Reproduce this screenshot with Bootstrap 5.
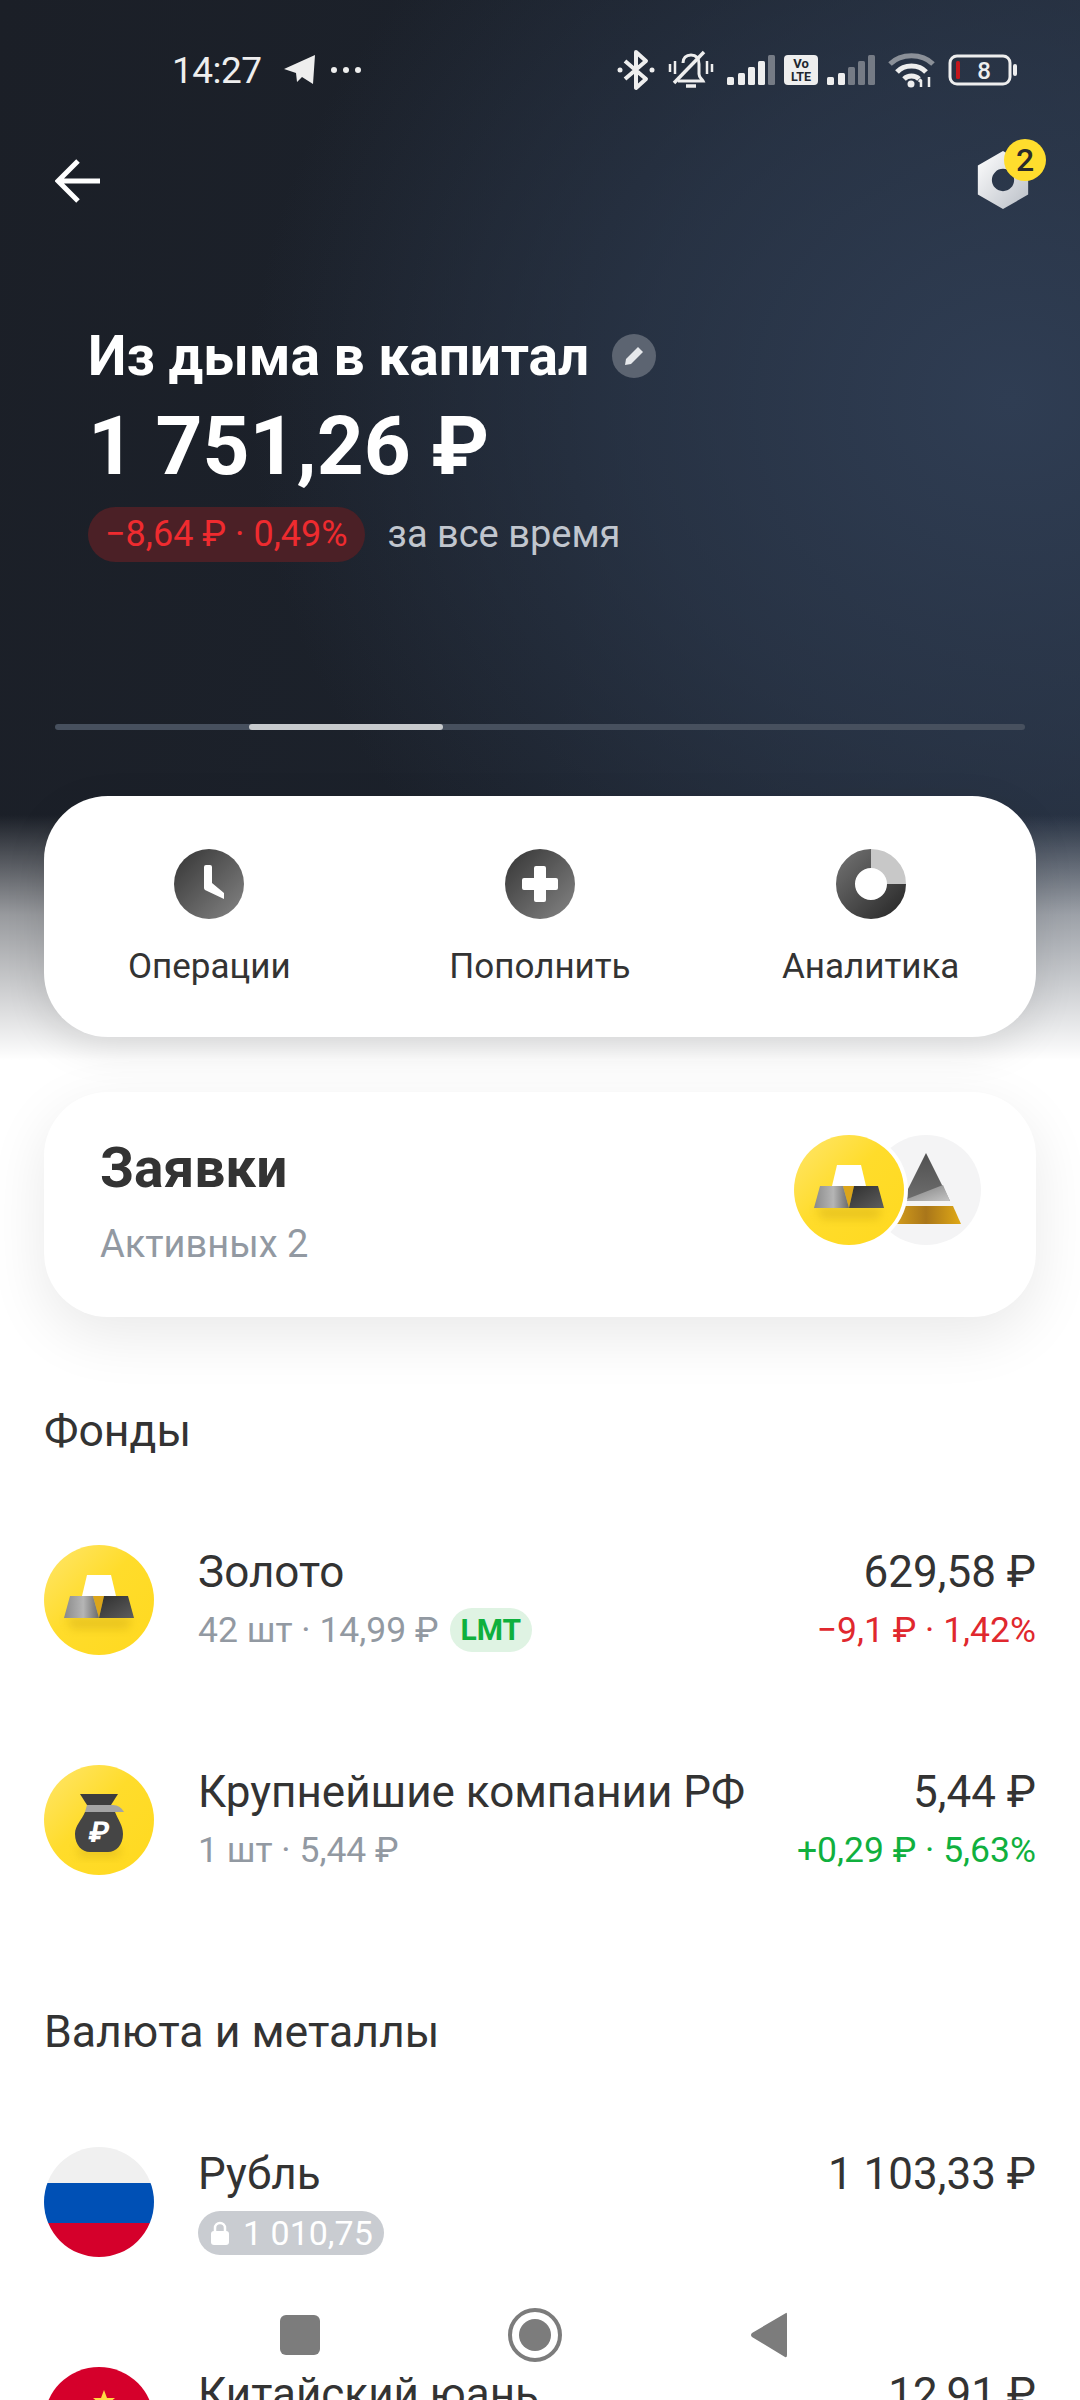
<!DOCTYPE html>
<html lang="ru">
<head>
    <meta charset="UTF-8">
    <meta name="viewport" content="width=device-width, initial-scale=1.0">
    <title>Из дыма в капитал</title>
    <link href="https://cdn.jsdelivr.net/npm/bootstrap@5.3.0/dist/css/bootstrap.min.css" rel="stylesheet">
    <style>
        html, body {
            width: 1080px;
            height: 2400px;
            overflow: hidden;
            background: #fff;
        }
        body {
            font-family: Roboto, "Liberation Sans", sans-serif;
            color: #333;
        }
        .app {
            position: relative;
            width: 1080px;
            height: 2400px;
            overflow: hidden;
            background:
                linear-gradient(to bottom, rgba(255,255,255,0) 815px, rgba(255,255,255,.55) 915px, #fff 1060px),
                radial-gradient(ellipse 760px 680px at 1010px 400px, #2f3d53 0%, rgba(46,60,82,.6) 50%, rgba(46,60,82,0) 100%),
                linear-gradient(100deg, #1b1f27 0%, #1c222c 45%, #252e3c 100%);
        }
        .status-row { height: 140px; padding: 0 62px 0 172px; }
        .status-time { font-size: 37px; color: #eee; line-height: 1; letter-spacing: -.5px; }
        .tg-icon { margin-left: 20px; }
        .dots-icon { margin-left: 11px; }
        .status-icons { gap: 9px; }
        .top-row { height: 82px; padding: 0 32px 0 55px; }
        .hero { padding: 0 55px; }
        .hero-title { margin: 104px 0 0 33px; color: #fff; font-size: 55px; font-weight: 700; line-height: 60px; gap: 23px; }
        .edit-dot { width: 44px; height: 44px; background: #5c6471; }
        .hero-sum { margin: 15px 0 0 33px; color: #fff; font-size: 82px; font-weight: 700; line-height: 90px; }
        .hero-delta { margin: 15px 0 0 33px; gap: 23px; }
        .delta-chip { height: 55px; padding: 0 17px; background: #4b2026; color: #ef2b2f; font-size: 36px; line-height: 55px; border-radius: 28px; }
        .delta-note { color: #c1c6ce; font-size: 38px; }
        .track { height: 6px; margin-top: 161px; background: #47505e; border-radius: 3px; }
        .track-thumb { width: 194px; height: 6px; margin-left: 194px; background: #c7cacd; border-radius: 3px; }
        .panel {
            margin: 0 44px;
            border: 0;
            border-radius: 64px;
            background: #fff;
        }
        .panel-actions { margin-top: 66px; height: 241px; padding-top: 53px; box-shadow: 0 12px 40px rgba(0,0,0,.1); }
        .action-label { margin-top: 26px; font-size: 35px; line-height: 44px; }
        .panel-orders { margin-top: 55px; height: 225px; padding: 46px 55px 0 56px; box-shadow: 0 18px 60px rgba(0,0,0,.09); }
        .orders-title { font-size: 55px; font-weight: 700; line-height: 60px; }
        .orders-sub { margin-top: 23px; font-size: 38px; line-height: 46px; color: #9299a2; }
        .orders-pics { margin-top: -26px; }
        .pic-back { margin-left: -37px; }
        .section-title { margin: 84px 44px 29px; font-size: 44.600px; font-weight: 400; line-height: 60px; }
        .section-next { margin-top: 72px; margin-bottom: 30px; }
        .asset-row { height: 220px; padding: 55px 44px 0; gap: 44px; }
        .asset-name { font-size: 44px; line-height: 54px; }
        .asset-sub { margin-top: 3px; font-size: 35.500px; line-height: 56px; color: #9299a2; gap: 11px; }
        .asset-sum { font-size: 44px; line-height: 54px; }
        .asset-delta { margin-top: 3px; font-size: 35.500px; line-height: 56px; }
        .delta-down { color: #e0282e; }
        .delta-up { color: #10b03e; }
        .lmt-chip { height: 44px; padding: 0 11px; background: #dff3e3; color: #0fb03d; font-size: 30px; font-weight: 700; line-height: 44px; border-radius: 22px; }
        .lock-chip { margin-top: 10px; height: 44px; padding: 0 11px 0 13px; gap: 14px; background: #c9ccd1; color: #fff; font-size: 34px; line-height: 44px; border-radius: 22px; }
        .nut-wrap { width: 72px; height: 84px; }
        .nut-shape { margin-top: 11px; }
        .nut-badge {
            position: absolute;
            top: 0;
            right: 2px;
            width: 42px;
            height: 42px;
            background: #ffdd2d;
            color: #2b2b2b;
            font-size: 32px;
            font-weight: 500;
            line-height: 42px;
        }
        /* системная панель поверх списка */
        .sys-nav {
            position: absolute;
            left: 0;
            right: 0;
            top: 2310px;
            height: 50px;
        }
        .sys-square { position: absolute; left: 280px; top: 5px; width: 40px; height: 40px; background: #7c7c7c; border-radius: 6px; }
        .sys-home { position: absolute; left: 508px; top: -2px; }
        .sys-back { position: absolute; left: 750px; top: 1px; }
    </style>
</head>
<body>
    <svg width="0" height="0" class="d-block">
        <defs>
            <linearGradient id="yellowFill" x1="0" y1="0" x2="1" y2="1">
                <stop offset="0" stop-color="#ffe66e"/>
                <stop offset=".45" stop-color="#ffdc2b"/>
                <stop offset="1" stop-color="#ffd91f"/>
            </linearGradient>
            <linearGradient id="darkRound" x1="0" y1="0" x2="1" y2="1">
                <stop offset="0" stop-color="#343434"/>
                <stop offset="1" stop-color="#858585"/>
            </linearGradient>
            <linearGradient id="donutFill" x1="0" y1="0" x2="1" y2="1">
                <stop offset="0" stop-color="#6a6a6a"/>
                <stop offset="1" stop-color="#2f2f2f"/>
            </linearGradient>
            <linearGradient id="barLeft" x1="0" y1="0" x2="1" y2="0">
                <stop offset="0" stop-color="#8a8a8a"/>
                <stop offset=".55" stop-color="#b5b5b5"/>
                <stop offset="1" stop-color="#6a6a6a"/>
            </linearGradient>
            <linearGradient id="barRight" x1="0" y1="0" x2="1" y2="1">
                <stop offset="0" stop-color="#2f2f2f"/>
                <stop offset="1" stop-color="#5e5e5e"/>
            </linearGradient>
            <linearGradient id="peakFill" x1="0" y1="0" x2="0" y2="1">
                <stop offset="0" stop-color="#505050"/>
                <stop offset="1" stop-color="#6e6e6e"/>
            </linearGradient>
            <linearGradient id="peakLight" x1="0" y1="0" x2="1" y2="1">
                <stop offset="0" stop-color="#7a7a7a"/>
                <stop offset="1" stop-color="#c4c4c4"/>
            </linearGradient>
            <linearGradient id="goldBand" x1="0" y1="0" x2="1" y2="0">
                <stop offset="0" stop-color="#d9a21c"/>
                <stop offset=".5" stop-color="#a9761a"/>
                <stop offset="1" stop-color="#e0a916"/>
            </linearGradient>
            <linearGradient id="nutFill" x1="0" y1="0" x2="1" y2="1">
                <stop offset="0" stop-color="#ffffff"/>
                <stop offset="1" stop-color="#b9bec6"/>
            </linearGradient>
            <filter id="softShade" x="-40%" y="-60%" width="180%" height="220%">
                <feGaussianBlur stdDeviation="5"/>
            </filter>
            <symbol id="goldPic" viewBox="0 0 110 110">
                <circle cx="55" cy="55" r="55" fill="url(#yellowFill)"/>
                <path d="M22 72H88L84 84H28Z" fill="#b8930e" opacity=".3" filter="url(#softShade)"/>
                <path d="M43 30H67L72 51H38Z" fill="#fff"/>
                <path d="M49 51H60L55 73Z" fill="#dca51a"/>
                <path d="M26 51H49L55 73H20Z" fill="url(#barLeft)"/>
                <path d="M60 51H84L90 73H55Z" fill="url(#barRight)"/>
            </symbol>
            <symbol id="bagPic" viewBox="0 0 110 110">
                <circle cx="55" cy="55" r="55" fill="url(#yellowFill)"/>
                <path d="M32 82H78L74 92H36Z" fill="#b8930e" opacity=".3" filter="url(#softShade)"/>
                <path d="M36 29H74L67 40H43Z" fill="#3d3d3d"/>
                <path d="M43 40H69Q76 40 80 47H41Z" fill="#a4a4a4"/>
                <path d="M41 47H71C74 55 79 60 79 69C79 80 72 87 64 87H46C38 87 31 80 31 69C31 60 38 55 41 47Z" fill="#454545"/>
                <text x="55" y="77" text-anchor="middle" font-family="Roboto, sans-serif" font-size="29" font-weight="700" fill="#fff" transform="skewX(-10) translate(12 0)">₽</text>
            </symbol>
        </defs>
    </svg>

    <div class="app">
        <div class="status-row d-flex align-items-center justify-content-between">
            <div class="d-flex align-items-center">
                <span class="status-time">14:27</span>
                <svg class="tg-icon" width="36" height="32" viewBox="0 0 36 32"><path d="M33 1 31 30 20 23 15 28 14 19 2 15Z" fill="#eee"/></svg>
                <svg class="dots-icon" width="34" height="8" viewBox="0 0 34 8"><circle cx="5" cy="4" r="3" fill="#eee"/><circle cx="17" cy="4" r="3" fill="#eee"/><circle cx="29" cy="4" r="3" fill="#eee"/></svg>
            </div>
            <div class="status-icons d-flex align-items-center">
                <svg width="38" height="42" viewBox="0 0 38 42" fill="none" stroke="#eee" stroke-width="4" stroke-linejoin="round"><path d="M8 12 29 30 19 39V3L29 12 8 30"/><circle cx="3" cy="21" r="2.500" fill="#eee" stroke="none"/><circle cx="35" cy="21" r="2.500" fill="#eee" stroke="none"/></svg>
                <svg class="ms-1" width="46" height="40" viewBox="0 0 46 40" fill="none" stroke="#eee" stroke-width="3"><path d="M15 13C15 8 18 5 23 5 28 5 31 8 31 14V24C31 28 34 29 35 31H10"/><path d="M36 2 6 33" stroke-width="3.500"/><path d="M18 36H28" stroke-width="3.500"/><path d="M2 14V22M7 11V24M39 11V24M44 14V22" stroke-width="2.500"/></svg>
                <svg class="ms-1" width="48" height="32" viewBox="0 0 48 32" fill="#eee"><rect x="0" y="23" width="7" height="8" rx="1.500"/><rect x="11" y="19" width="7" height="12" rx="1.500"/><rect x="21" y="13" width="7" height="18" rx="1.500"/><rect x="31" y="7" width="7" height="24" rx="1.500"/><rect x="41" y="1" width="7" height="30" rx="1.500" fill="#757b85"/></svg>
                <svg width="34" height="30" viewBox="0 0 34 30"><rect width="34" height="30" rx="4" fill="#eee"/><text x="17" y="13" text-anchor="middle" font-family="Roboto, sans-serif" font-size="13" font-weight="700" fill="#20262f">Vo</text><text x="17" y="26" text-anchor="middle" font-family="Roboto, sans-serif" font-size="12.500" font-weight="700" fill="#20262f">LTE</text></svg>
                <svg width="48" height="32" viewBox="0 0 48 32" fill="#757b85"><rect x="0" y="23" width="7" height="8" rx="1.500" fill="#eee"/><rect x="11" y="19" width="7" height="12" rx="1.500" fill="#eee"/><rect x="21" y="13" width="7" height="18" rx="1.500"/><rect x="31" y="7" width="7" height="24" rx="1.500"/><rect x="41" y="1" width="7" height="30" rx="1.500"/></svg>
                <svg class="ms-1" width="47" height="36" viewBox="0 0 47 36" fill="none" stroke-width="5"><path d="M2 12C13 1 34 1 45 12" stroke="#8b9098"/><path d="M9 20C16 12 31 12 38 20" stroke="#eee"/><path d="M16 27C20 23 27 23 31 27" stroke="#eee"/><circle cx="23" cy="32" r="3.500" fill="#eee"/><path d="M33 28V35M31 30 33 27M41 25V35" stroke="#eee" stroke-width="2.500"/></svg>
                <svg class="ms-1" width="70" height="32" viewBox="0 0 70 32"><rect x="2" y="2" width="60" height="28" rx="7" fill="none" stroke="#eee" stroke-width="3"/><rect x="8" y="7" width="4" height="18" rx="1.500" fill="#c4161c"/><text x="36" y="25" text-anchor="middle" font-family="Roboto, sans-serif" font-size="24" font-weight="500" fill="#eee">8</text><rect x="65" y="10" width="4" height="12" rx="2" fill="#eee"/></svg>
            </div>
        </div>

        <div class="top-row d-flex align-items-center justify-content-between">
            <svg width="46" height="44" viewBox="0 0 46 44" fill="none" stroke="#fff" stroke-width="5"><path d="M45 22H4M23 2 3 22 23 42"/></svg>
            <div class="nut-wrap position-relative">
                <svg class="nut-shape d-block" width="54" height="60" viewBox="0 0 54 62"><path fill-rule="evenodd" d="M27 1 53 16V46L27 61 1 46V16ZM27 19.500A11.500 11.500 0 1 0 27 42.500 11.500 11.500 0 1 0 27 19.500Z" fill="url(#nutFill)"/></svg>
                <span class="nut-badge rounded-circle text-center">2</span>
            </div>
        </div>

        <div class="hero">
            <div class="hero-title d-flex align-items-center">
                <span>Из дыма в капитал</span>
                <span class="edit-dot rounded-circle d-flex align-items-center justify-content-center">
                    <svg width="22" height="22" viewBox="0 0 22 22"><path d="M15 2 20 7 8 19 2 20 3 14Z" fill="#e6e8eb"/></svg>
                </span>
            </div>
            <div class="hero-sum">1 751,26 ₽</div>
            <div class="hero-delta d-flex align-items-center">
                <span class="delta-chip">−8,64 ₽ · 0,49%</span>
                <span class="delta-note">за все время</span>
            </div>
            <div class="track">
                <div class="track-thumb"></div>
            </div>
        </div>

        <div class="card panel panel-actions">
            <div class="row g-0 text-center">
                <div class="col-4">
                    <svg width="70" height="70" viewBox="0 0 70 70"><circle cx="35" cy="35" r="35" fill="url(#darkRound)"/><path d="M30 18Q30 16 32 16H36Q38 16 38 18V34L50 44V50L31 41Q30 40 30 39Z" fill="#fff"/></svg>
                    <div class="action-label">Операции</div>
                </div>
                <div class="col-4">
                    <svg width="70" height="70" viewBox="0 0 70 70"><circle cx="35" cy="35" r="35" fill="url(#darkRound)"/><path d="M29 19Q29 17 31 17H39Q41 17 41 19V29H51Q53 29 53 31V39Q53 41 51 41H41V51Q41 53 39 53H31Q29 53 29 51V41H19Q17 41 17 39V31Q17 29 19 29H29Z" fill="#fff"/></svg>
                    <div class="action-label">Пополнить</div>
                </div>
                <div class="col-4">
                    <svg width="70" height="70" viewBox="0 0 70 70" fill="none" stroke-width="19"><path d="M60.500 35A25.500 25.500 0 1 1 35 9.500" stroke="url(#donutFill)"/><path d="M35 9.500A25.500 25.500 0 0 1 60.500 35" stroke="#c8c8c8"/></svg>
                    <div class="action-label">Аналитика</div>
                </div>
            </div>
        </div>

        <div class="card panel panel-orders">
            <div class="d-flex justify-content-between">
                <div>
                    <div class="orders-title">Заявки</div>
                    <div class="orders-sub">Активных 2</div>
                </div>
                <div class="orders-pics d-flex flex-row-reverse align-items-center">
                    <svg class="pic-back" width="110" height="110" viewBox="0 0 110 110">
                        <circle cx="55" cy="55" r="55" fill="#f4f4f5"/>
                        <path d="M55 18 79 66H31Z" fill="url(#peakFill)"/>
                        <path d="M79 66H31L72 50Z" fill="url(#peakLight)"/>
                        <path d="M28 71H82L90 89H20Z" fill="url(#goldBand)"/>
                    </svg>
                    <svg class="position-relative" width="118" height="118" viewBox="-4 -4 118 118">
                        <circle cx="55" cy="55" r="59" fill="#fff"/>
                        <use href="#goldPic" width="110" height="110"/>
                    </svg>
                </div>
            </div>
        </div>

        <div class="section-title">Фонды</div>

        <div class="asset-row d-flex">
            <svg class="flex-shrink-0" width="110" height="110"><use href="#goldPic" width="110" height="110"/></svg>
            <div class="flex-grow-1">
                <div class="asset-name">Золото</div>
                <div class="asset-sub d-flex align-items-center">
                    <span>42 шт · 14,99 ₽</span>
                    <span class="lmt-chip">LMT</span>
                </div>
            </div>
            <div class="text-end">
                <div class="asset-sum">629,58 ₽</div>
                <div class="asset-delta delta-down">−9,1 ₽ · 1,42%</div>
            </div>
        </div>

        <div class="asset-row d-flex">
            <svg class="flex-shrink-0" width="110" height="110"><use href="#bagPic" width="110" height="110"/></svg>
            <div class="flex-grow-1">
                <div class="asset-name">Крупнейшие компании РФ</div>
                <div class="asset-sub">1 шт · 5,44 ₽</div>
            </div>
            <div class="text-end">
                <div class="asset-sum">5,44 ₽</div>
                <div class="asset-delta delta-up">+0,29 ₽ · 5,63%</div>
            </div>
        </div>

        <div class="section-title section-next">Валюта и металлы</div>

        <div class="asset-row d-flex">
            <svg class="flex-shrink-0" width="110" height="110" viewBox="0 0 110 110">
                <clipPath id="flagClip"><circle cx="55" cy="55" r="55"/></clipPath>
                <g clip-path="url(#flagClip)">
                    <rect width="110" height="36" fill="#f0f0f0"/>
                    <rect y="36" width="110" height="40" fill="#0050b5"/>
                    <rect y="76" width="110" height="34" fill="#d5002b"/>
                </g>
            </svg>
            <div class="flex-grow-1">
                <div class="asset-name">Рубль</div>
                <div class="lock-chip d-inline-flex align-items-center">
                    <svg width="18" height="24" viewBox="0 0 18 24"><path d="M4 11V7A5 5 0 0 1 14 7V11" fill="none" stroke="#fff" stroke-width="2.500"/><rect y="10" width="18" height="14" rx="3" fill="#fff"/></svg>
                    <span>1 010,75</span>
                </div>
            </div>
            <div class="text-end">
                <div class="asset-sum">1 103,33 ₽</div>
            </div>
        </div>

        <div class="asset-row d-flex">
            <svg class="flex-shrink-0" width="110" height="110" viewBox="0 0 110 110">
                <circle cx="55" cy="55" r="55" fill="#d5002b"/>
                <path d="M60 23 63 31 71 31 65 36 67 44 60 39 53 44 55 36 49 31 57 31Z" fill="#ffda44"/>
            </svg>
            <div class="flex-grow-1">
                <div class="asset-name">Китайский юань</div>
            </div>
            <div class="text-end">
                <div class="asset-sum">12,91 ₽</div>
            </div>
        </div>

        <div class="sys-nav">
            <div class="sys-square"></div>
            <svg class="sys-home" width="54" height="54" viewBox="0 0 54 54"><circle cx="27" cy="27" r="25" fill="none" stroke="#7c7c7c" stroke-width="4"/><circle cx="27" cy="27" r="16" fill="#7c7c7c"/></svg>
            <svg class="sys-back" width="38" height="48" viewBox="0 0 38 48"><path d="M36 2Q37 1 37 4V44Q37 47 35 46L2 26Q0 24 2 22Z" fill="#7c7c7c"/></svg>
        </div>
    </div>

    <script src="https://cdn.jsdelivr.net/npm/bootstrap@5.3.0/dist/js/bootstrap.bundle.min.js"></script>
</body>
</html>
